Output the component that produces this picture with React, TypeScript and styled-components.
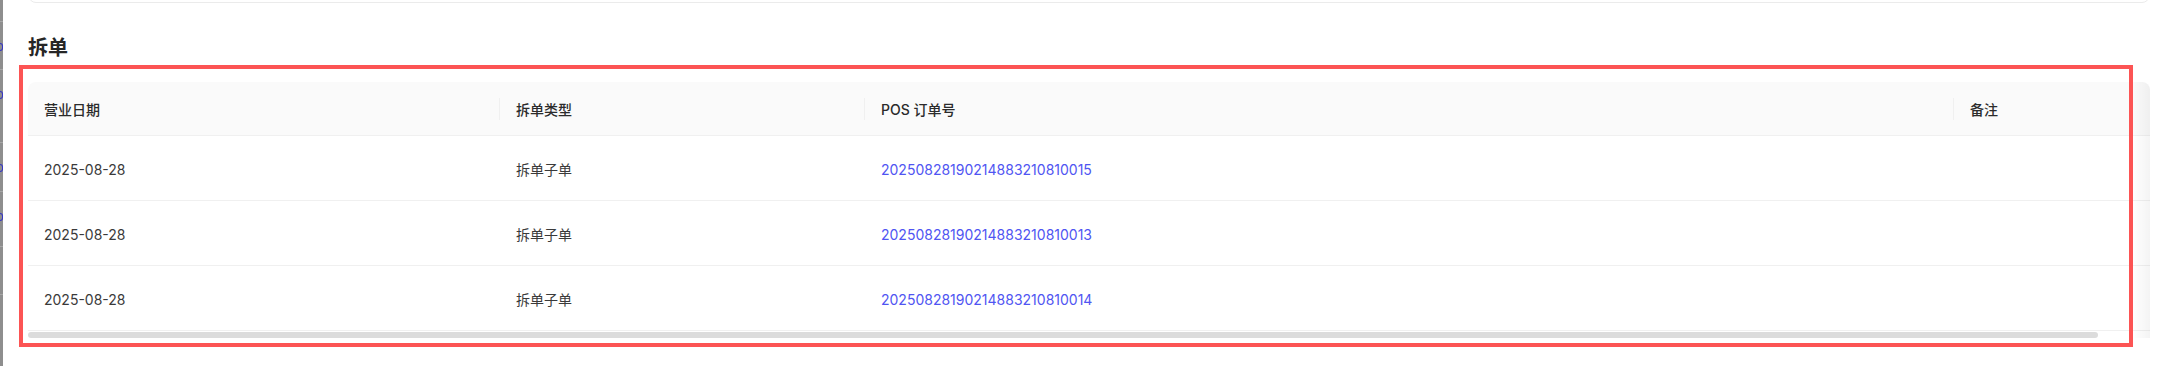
import React from 'react';
import styled, { createGlobalStyle } from 'styled-components';

interface SplitRow {
  businessDate: string;
  splitType: string;
  posOrderNo: string;
  remark: string;
}

interface StripItem {
  height: number;
  mark?: boolean;
}

const GlobalStyle = createGlobalStyle`
  html, body {
    margin: 0;
    padding: 0;
    background: #ffffff;
  }

  body {
    font-family: Inter, "Noto Sans CJK SC", "Noto Sans", sans-serif;
    color: #333333;
    -webkit-font-smoothing: antialiased;
  }
`;

const columns = [
  { key: 'businessDate', title: '营业日期', width: 472 },
  { key: 'splitType', title: '拆单类型', width: 365 },
  { key: 'posOrderNo', title: 'POS 订单号', width: 1089 },
  { key: 'remark', title: '备注', width: 249 }
];

const rows: SplitRow[] = [
  { businessDate: '2025-08-28', splitType: '拆单子单', posOrderNo: '20250828190214883210810015', remark: '' },
  { businessDate: '2025-08-28', splitType: '拆单子单', posOrderNo: '20250828190214883210810013', remark: '' },
  { businessDate: '2025-08-28', splitType: '拆单子单', posOrderNo: '20250828190214883210810014', remark: '' }
];

// the dimmed edge of the side menu that peeks in on the left
const stripItems: StripItem[] = [
  { height: 12 },
  { height: 48, mark: true },
  { height: 73, mark: true },
  { height: 49, mark: true },
  { height: 55, mark: true },
  { height: 48 },
  { height: 81 }
];

const tableWidth = columns.reduce((sum, col) => sum + col.width, 0);
const viewWidth = 2122;

const Page = styled.div`
  display: flex;
  height: 366px;
  overflow: hidden;
  background: #ffffff;
`;

const Strip = styled.div`
  width: 3px;
  flex: none;
  display: flex;
  flex-direction: column;
  background: #8e8e8e;
  overflow: hidden;
`;

const StripRow = styled.div<{ $h: number }>`
  height: ${({ $h }) => $h}px;
  flex: none;
  box-sizing: border-box;
  padding-top: 21px;
  border-bottom: 1px solid #a6a6a6;
`;

const StripMark = styled.div`
  width: 3px;
  height: 8px;
  box-sizing: border-box;
  border: 1px solid #3535c4;
  border-left: none;
  border-radius: 0 3px 3px 0;
`;

const Main = styled.div`
  flex: 1;
  min-width: 0;
  padding: 0 10px 0 25px;
`;

const TopCard = styled.div`
  height: 24px;
  margin-top: -21px;
  box-sizing: border-box;
  border: 1px solid #ebebeb;
  border-radius: 8px;
  background: #ffffff;
`;

const SectionTitle = styled.div`
  margin-top: 31px;
  font-size: 20px;
  line-height: 28px;
  font-weight: 600;
  color: #262626;
`;

const TableSection = styled.div`
  position: relative;
  margin-top: 20px;
`;

const TableView = styled.div`
  position: relative;
  width: ${viewWidth}px;
  overflow: hidden;
  border-radius: 8px 8px 0 0;
`;

const Table = styled.table`
  width: ${tableWidth}px;
  table-layout: fixed;
  border-collapse: separate;
  border-spacing: 0;
  font-size: 14px;
`;

const HeadCell = styled.th`
  position: relative;
  padding: 17px 16px 15px;
  line-height: 21px;
  text-align: left;
  font-weight: 500;
  color: #2b2b2b;
  background: #fafafa;
  border-bottom: 1px solid #f0f0f0;
  white-space: nowrap;

  &:not(:last-child)::before {
    content: '';
    position: absolute;
    top: 50%;
    right: 0;
    width: 1px;
    height: 22px;
    transform: translateY(-50%);
    background: #f0f0f0;
  }
`;

const BodyCell = styled.td<{ $link?: boolean }>`
  padding: 23px 16px 19px;
  line-height: 22px;
  color: ${({ $link }) => ($link ? '#5055f2' : '#3a3a3a')};
  border-bottom: 1px solid #f0f0f0;
  white-space: nowrap;
  cursor: ${({ $link }) => ($link ? 'pointer' : 'default')};
`;

const ScrollTrack = styled.div`
  display: flex;
  align-items: flex-end;
  height: 7px;
  width: ${viewWidth}px;
`;

const ScrollThumb = styled.div`
  height: 6px;
  border-radius: 3px;
  background: #dcdcdc;
`;

const EdgeShadow = styled.div`
  position: absolute;
  top: 0;
  right: 0;
  bottom: 0;
  width: 17px;
  pointer-events: none;
  background: linear-gradient(to right, rgba(0, 0, 0, 0), rgba(0, 0, 0, 0.045));
`;

const Annotation = styled.div`
  position: absolute;
  top: -17px;
  left: -9px;
  right: 17px;
  bottom: -9px;
  border: 4px solid #fc5454;
  pointer-events: none;
`;

const App = () => {
  const thumbWidth = Math.round(viewWidth * viewWidth / tableWidth);

  return (
    <>
      <GlobalStyle />
      <Page>
        <Strip>
          {stripItems.map((item, index) => (
            <StripRow
              $h={item.height}
              key={`strip_${index}`}
            >
              {item.mark && <StripMark />}
            </StripRow>
          ))}
        </Strip>
        <Main>
          <TopCard />
          <SectionTitle>拆单</SectionTitle>
          <TableSection>
            <TableView>
              <Table>
                <colgroup>
                  {columns.map((col) => (
                    <col
                      key={col.key}
                      style={{ width: col.width }}
                    />
                  ))}
                </colgroup>
                <thead>
                  <tr>
                    {columns.map((col) => (
                      <HeadCell key={col.key}>{col.title}</HeadCell>
                    ))}
                  </tr>
                </thead>
                <tbody>
                  {rows.map((row, index) => (
                    <tr key={`${row.posOrderNo}_${index}`}>
                      <BodyCell>{row.businessDate}</BodyCell>
                      <BodyCell>{row.splitType}</BodyCell>
                      <BodyCell $link>{row.posOrderNo}</BodyCell>
                      <BodyCell>{row.remark}</BodyCell>
                    </tr>
                  ))}
                </tbody>
              </Table>
              <ScrollTrack>
                <ScrollThumb style={{ width: thumbWidth }} />
              </ScrollTrack>
              <EdgeShadow />
            </TableView>
            <Annotation />
          </TableSection>
        </Main>
      </Page>
    </>
  );
};

export default App;
